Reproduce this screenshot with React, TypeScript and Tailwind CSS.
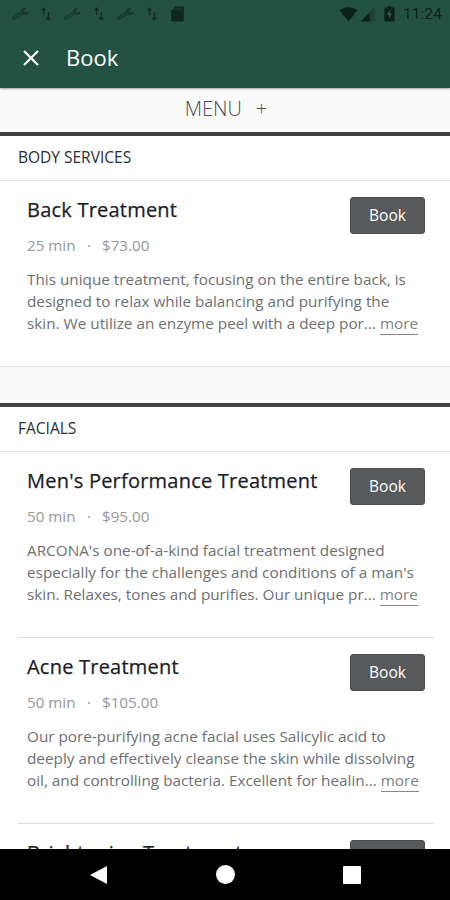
import { Fragment } from "react";

type Treatment = {
  name: string;
  duration: string;
  price: string;
  lines: string[];
};

type Section = {
  title: string;
  items: Treatment[];
};

const sections: Section[] = [
  {
    title: "BODY SERVICES",
    items: [
      {
        name: "Back Treatment",
        duration: "25 min",
        price: "$73.00",
        lines: [
          "This unique treatment, focusing on the entire back, is",
          "designed to relax while balancing and purifying the",
          "skin. We utilize an enzyme peel with a deep por...",
        ],
      },
    ],
  },
  {
    title: "FACIALS",
    items: [
      {
        name: "Men's Performance Treatment",
        duration: "50 min",
        price: "$95.00",
        lines: [
          "ARCONA's one-of-a-kind facial treatment designed",
          "especially for the challenges and conditions of a man's",
          "skin. Relaxes, tones and purifies. Our unique pr...",
        ],
      },
      {
        name: "Acne Treatment",
        duration: "50 min",
        price: "$105.00",
        lines: [
          "Our pore-purifying acne facial uses Salicylic acid to",
          "deeply and effectively cleanse the skin while dissolving",
          "oil, and controlling bacteria. Excellent for healin...",
        ],
      },
      {
        name: "Brightening Treatment",
        duration: "",
        price: "",
        lines: [],
      },
    ],
  },
];

function WrenchIcon() {
  return (
    <svg width="17" height="14" viewBox="0 0 17 14" className="shrink-0">
      <path d="M1.8 11 10 6" stroke="#173a2e" strokeWidth="3.4" strokeLinecap="round" />
      <path d="M2.2 10.8 9 6.6" stroke="#245242" strokeWidth="1" strokeLinecap="round" />
      <path d="M14.4 1.4C11.6.4 8.4 2 8.6 5.2c.2 2.8 4 4.2 8 1.2l-.6-1.8-2.8.8-1.4-1.6z" fill="#173a2e" />
    </svg>
  );
}

function TransferIcon() {
  return (
    <svg width="10" height="14" viewBox="0 0 10 14" className="shrink-0">
      <path d="M2.6 8.2V1.8M.6 3.4 2.6 1.2l2 2.2M7.4 5v7.4M5.4 10.6l2 2.2 2-2.2" fill="none" stroke="#12291f" strokeWidth="1.4" />
    </svg>
  );
}

function StatusBar() {
  return (
    <div className="flex h-7 items-center justify-between pl-3 pr-[8px]">
      <div className="flex items-center">
        <WrenchIcon />
        <span className="w-3" />
        <TransferIcon />
        <span className="w-[13px]" />
        <WrenchIcon />
        <span className="w-[13px]" />
        <TransferIcon />
        <span className="w-[13px]" />
        <WrenchIcon />
        <span className="w-[13px]" />
        <TransferIcon />
        <span className="w-[14px]" />
        <svg width="13" height="16" viewBox="0 0 13 16">
          <path d="M4.4.4h7.2q1.2 0 1.2 1.2v12.6q0 1.2-1.2 1.2H1.4q-1.2 0-1.2-1.2V4.8z" fill="#0f261d" />
          <path d="M5 2v2.6M7.4 2v2.6M9.8 2v2.6" stroke="#245242" strokeWidth="0.8" />
        </svg>
      </div>
      <div className="flex items-center">
        <svg width="19" height="15" viewBox="0 0 19 15">
          <path d="M9.5 14.6.4 3.2Q9.5-2.6 18.6 3.2z" fill="#0c2219" />
        </svg>
        <svg width="15" height="15" viewBox="0 0 15 15" className="ml-0.5">
          <path d="M14.6.4v14H.6z" fill="#1c4335" />
          <path d="M9.6 5.4v9h-9z" fill="#0c2219" />
        </svg>
        <svg width="11" height="16" viewBox="0 0 11 16" className="ml-[9px]">
          <path d="M3.4 0h4.2v1.6h1.8q1.2 0 1.2 1.2v11.6q0 1.2-1.2 1.2H1.6q-1.2 0-1.2-1.2V2.8q0-1.2 1.2-1.2h1.8z" fill="#0c2219" />
          <path d="M6.2 3.6 3 9h2v4l3-5.4H6.2z" fill="#2b5949" />
        </svg>
        <span className="mt-0.5 ml-2 font-['Roboto'] text-[15.5px] leading-none tracking-[0.1px] text-[#0c2219]">11:24</span>
      </div>
    </div>
  );
}

function Card({ item }: { item: Treatment }) {
  return (
    <div className="h-[185px] px-[27px]">
      <div className="flex h-[54px] items-start justify-between">
        <h3 className="pt-[15px] text-[20px] leading-[28px] tracking-[0.22px] whitespace-nowrap text-[#1b1c28] [-webkit-text-stroke:0.25px_#1b1c28]">{item.name}</h3>
        <button className="mt-4 -mr-0.5 h-[37px] w-[75px] shrink-0 rounded-[3px] border border-[#4b4d4f] bg-[#57595b] text-[15.5px] leading-[35px] text-white">
          Book
        </button>
      </div>
      {item.lines.length > 0 && (
        <>
          <p className="flex h-5 items-center text-[15.2px] text-[#97989a]">
            <span className="w-[60px]">{item.duration}</span>
            <span className="w-[15px]">·</span>
            <span>{item.price}</span>
          </p>
          <div className="pt-[13px] text-[15.3px] leading-[22px] whitespace-nowrap text-[#6d6f73]">
            {item.lines.map((line, i) => (
              <p key={line}>
                {line}
                {i === item.lines.length - 1 && (
                  <>
                    {" "}
                    <a className="inline-block h-[23px] border-b border-[#85878a] text-[#808285]">more</a>
                  </>
                )}
              </p>
            ))}
          </div>
        </>
      )}
    </div>
  );
}

export default function App() {
  return (
    <div className="flex h-[900px] w-[450px] flex-col overflow-hidden bg-white font-['Open_Sans',sans-serif]">
      <header className="z-10 h-[88px] shrink-0 bg-[#245242] shadow-[0_1px_2px_rgba(0,0,0,0.35)]">
        <StatusBar />
        <div className="flex h-[60px] items-center pl-[23px]">
          <svg width="16" height="16" viewBox="0 0 16 16" className="mb-px">
            <path d="M1 1l14 14M15 1 1 15" stroke="#fff" strokeWidth="2.2" />
          </svg>
          <h1 className="mb-0.5 ml-[27px] text-[22px] text-white">Book</h1>
        </div>
      </header>

      <main className="min-h-0 flex-1 overflow-hidden">
        <div className="flex h-11 items-center justify-center bg-[#fafafa] pb-0.5 pl-0.5 text-[20px] font-light text-[#4c4d4f]">
          <span>MENU</span>
          <span className="ml-[14px]">+</span>
        </div>
        {sections.map((section, i) => (
          <section key={section.title}>
            {i > 0 && <div className="h-[37px] border-t border-[#e0e0e0] bg-[#fafafa]" />}
            <h2 className="h-[49px] border-t-4 border-b border-t-[#414345] border-b-[#dedfe0] pl-[18px] text-[15.5px] leading-[42px] text-[#2b2c36]">
              {section.title}
            </h2>
            {section.items.map((item, j) => (
              <Fragment key={item.name}>
                {j > 0 && <div className="mr-4 ml-[18px] h-px bg-[#dcdddf]" />}
                <Card item={item} />
              </Fragment>
            ))}
          </section>
        ))}
      </main>

      <nav className="flex h-[51px] shrink-0 items-center bg-black pl-[90px]">
        <svg width="17" height="18" viewBox="0 0 17 18">
          <path d="M17 0v18L0 9z" fill="#fff" />
        </svg>
        <span className="ml-[109px] h-[19px] w-[19px] rounded-full bg-white" />
        <span className="ml-[108px] h-[18px] w-[18px] rounded-[1px] bg-white" />
      </nav>
    </div>
  );
}
